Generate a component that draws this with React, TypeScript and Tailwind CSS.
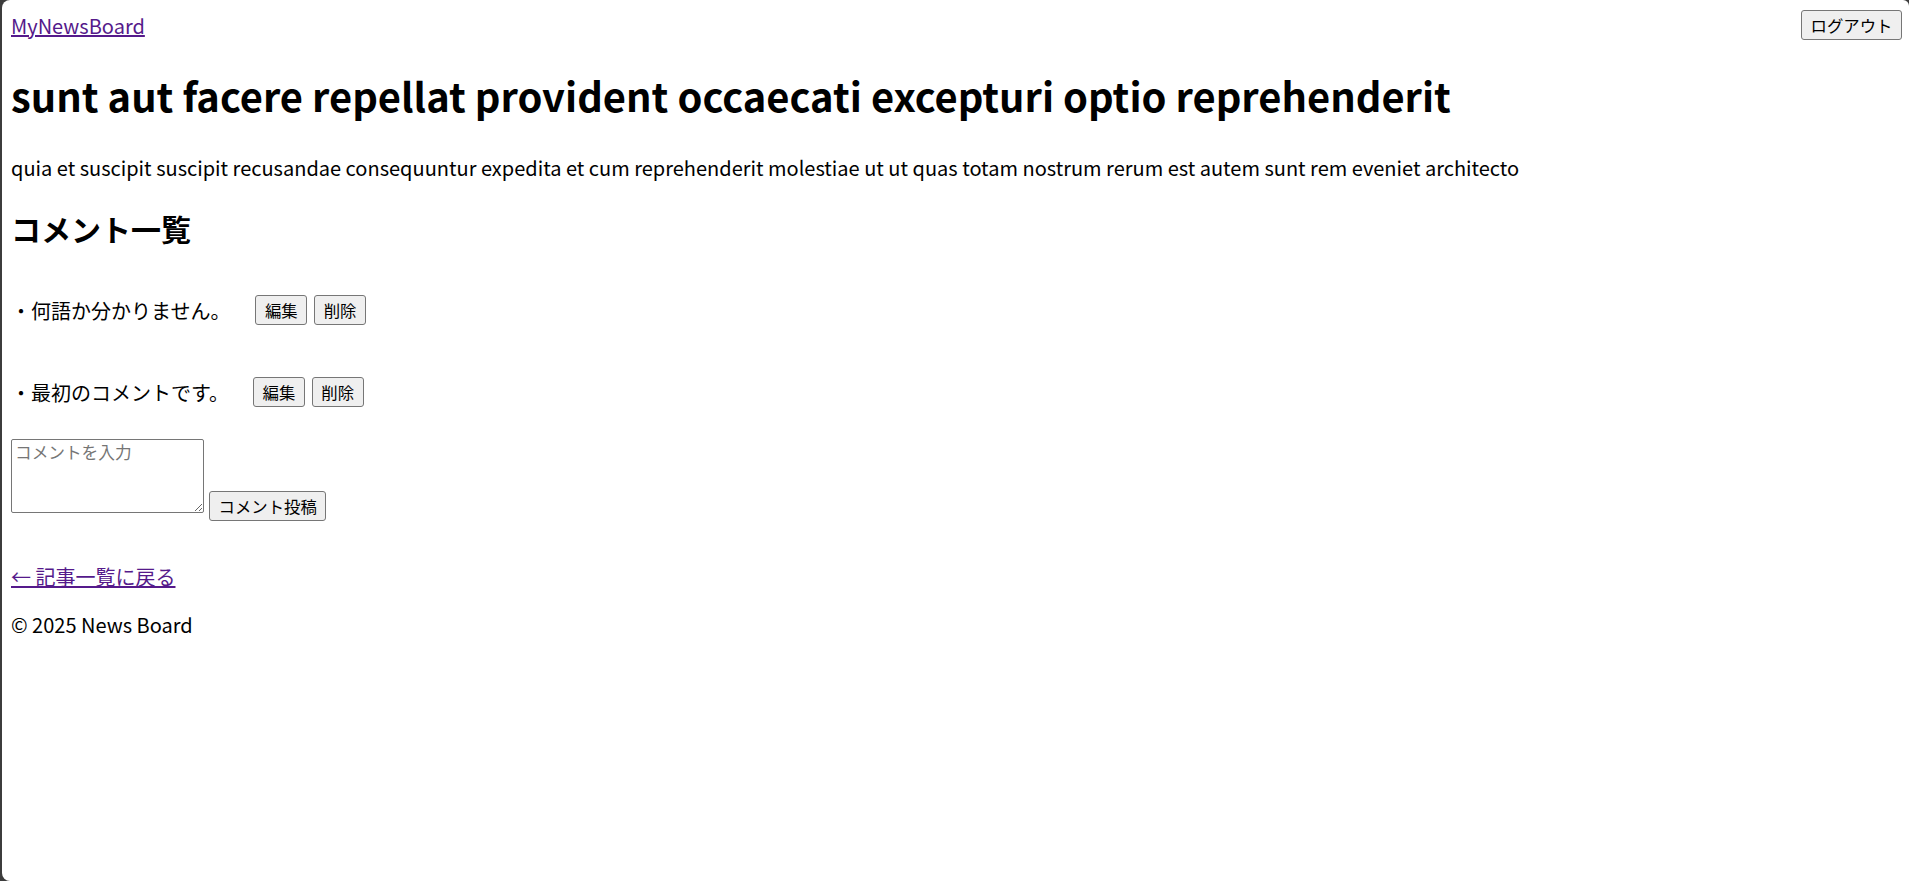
import React from "react";

const font = { fontFamily: "'Noto Sans CJK JP', 'Noto Sans', sans-serif" };

function Btn({ children, className = "" }: { children: React.ReactNode; className?: string }) {
  return (
    <button
      className={
        "h-[30px] px-[8.5px] text-[16.4px] leading-[24px] text-black bg-[#efefef] border border-[#767676] rounded-[3px] whitespace-nowrap " +
        className
      }
    >
      {children}
    </button>
  );
}

export default function App() {
  return (
    <div className="h-screen w-full bg-[#3c3c3c]" style={font}>
      <div className="h-full ml-[2px] bg-white rounded-tl-[8px] rounded-tr-[6px] rounded-bl-[8px] pl-[9px] pr-[7px] pt-[10px] text-black text-[20px]">
        <header className="flex justify-between items-center h-[30px]">
          <a href="#" className="text-[#551a8b] underline leading-[29px]">
            MyNewsBoard
          </a>
          <Btn className="h-[29px]">ログアウト</Btn>
        </header>

        <h1 className="text-[39.9px] font-bold leading-[58px] mt-[26px] mb-[29px]">
          sunt aut facere repellat provident occaecati excepturi optio reprehenderit
        </h1>
        <p className="leading-[29px]">
          quia et suscipit suscipit recusandae consequuntur expedita et cum reprehenderit molestiae ut ut quas totam nostrum rerum est autem sunt rem eveniet architecto
        </p>

        <h2 className="text-[30px] font-bold leading-[43px] mt-[25px]">コメント一覧</h2>

        <div className="flex flex-col gap-[52px] mt-[45px]">
          <div className="flex items-center h-[30px]">
            <span className="leading-[29px]">・何語か分かりません。</span>
            <Btn className="ml-[25px]">編集</Btn>
            <Btn className="ml-[7px]">削除</Btn>
          </div>
          <div className="flex items-center h-[30px]">
            <span className="leading-[29px]">・最初のコメントです。</span>
            <Btn className="ml-[24px]">編集</Btn>
            <Btn className="ml-[7px]">削除</Btn>
          </div>
        </div>

        <form className="flex items-start mt-[32px]" onSubmit={(e) => e.preventDefault()}>
          <textarea
            placeholder="コメントを入力"
            className="w-[193px] h-[74px] border border-[#767676] rounded-[2px] px-[3px] pt-[1px] pb-[2px] text-[16.67px] leading-[22px] placeholder:text-[#757575] bg-white"
            style={font}
          />
          <Btn className="ml-[5px] mt-[52px]">コメント投稿</Btn>
        </form>

        <p className="mt-[41px] leading-[29px]">
          <a href="#" className="text-[#551a8b] underline">
            ← 記事一覧に戻る
          </a>
        </p>
        <p className="mt-[19px] leading-[29px]">© 2025 News Board</p>
      </div>
    </div>
  );
}
